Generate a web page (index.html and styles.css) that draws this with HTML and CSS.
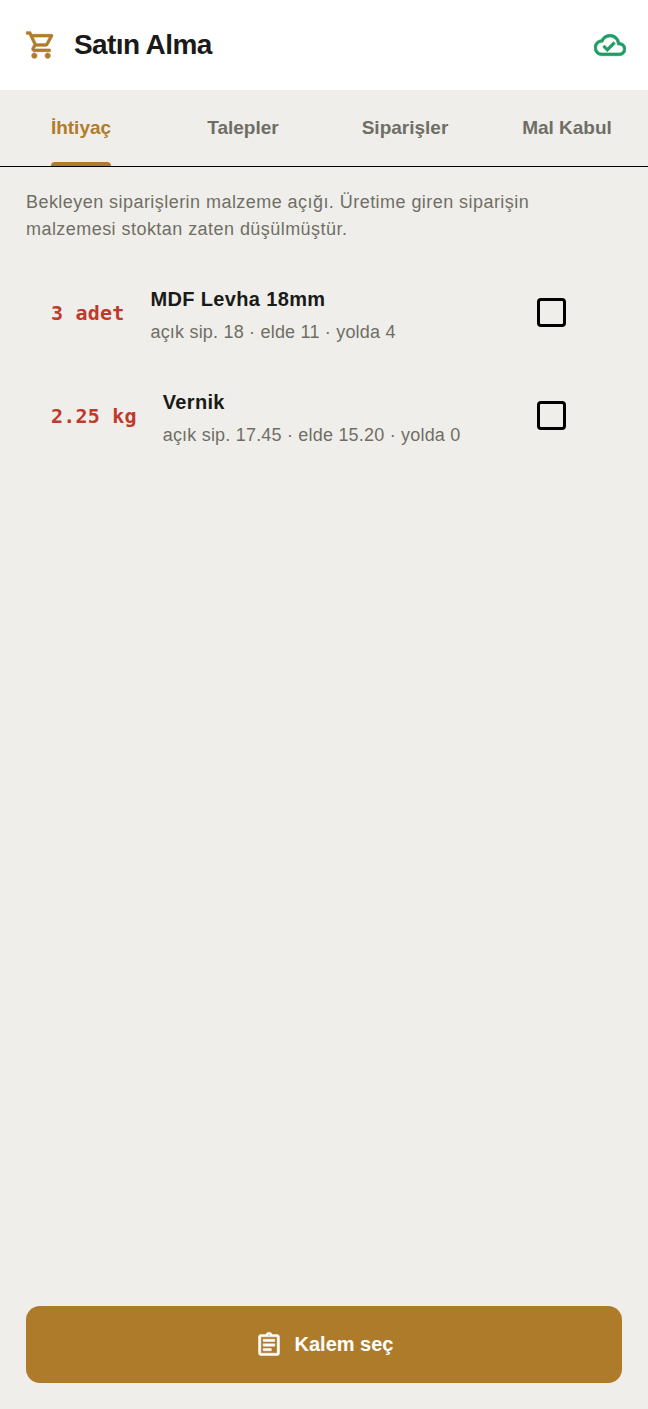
FILE: index.html
```html
<!DOCTYPE html>
<html lang="tr">
<head>
	<meta charset="UTF-8">
	<title>Satın Alma</title>
	<link rel="stylesheet" href="styles.css">
</head>
<body>
	<div class="page">
		<header class="topbar">
			<svg class="topbar-icon icon-gold" viewBox="0 0 24 24"><path d="M15.55 13c.75 0 1.41-.41 1.75-1.03l3.58-6.49c.37-.66-.11-1.48-.87-1.48H5.21l-.94-2H1v2h2l3.6 7.59-1.35 2.44C4.52 15.37 5.48 17 7 17h12v-2H7l1.1-2h7.45zM6.16 6h12.15l-2.76 5H8.53L6.16 6zM7 18c-1.1 0-1.99.9-1.99 2S5.9 22 7 22s2-.9 2-2-.9-2-2-2zm10 0c-1.1 0-1.99.9-1.99 2s.89 2 1.99 2 2-.9 2-2-.9-2-2-2z"/></svg>
			<h1 class="topbar-title">Satın Alma</h1>
			<svg class="topbar-icon icon-green" viewBox="0 0 24 24"><path d="M19.35 10.04C18.67 6.59 15.64 4 12 4 9.11 4 6.6 5.64 5.35 8.04 2.34 8.36 0 10.91 0 14c0 3.31 2.69 6 6 6h13c2.76 0 5-2.24 5-5 0-2.64-2.05-4.78-4.65-4.96zM19 18H6c-2.21 0-4-1.79-4-4 0-2.05 1.53-3.76 3.56-3.97l1.07-.11.5-.95C8.08 7.14 9.94 6 12 6c2.62 0 4.88 1.86 5.39 4.43l.3 1.5 1.53.11c1.56.1 2.78 1.41 2.78 2.96 0 1.65-1.35 3-3 3zm-9-3.82l-2.09-2.09L6.5 13.5 10 17l6.01-6.01-1.41-1.41z"/></svg>
		</header>

		<nav class="tabs">
			<div class="tab tab-active"><span class="tab-label">İhtiyaç</span></div>
			<div class="tab"><span class="tab-label">Talepler</span></div>
			<div class="tab"><span class="tab-label">Siparişler</span></div>
			<div class="tab"><span class="tab-label">Mal Kabul</span></div>
		</nav>

		<main class="content">
			<p class="intro">Bekleyen siparişlerin malzeme açığı. Üretime giren siparişin malzemesi stoktan zaten düşülmüştür.</p>

			<div class="item">
				<span class="item-qty">3 adet</span>
				<div class="item-text">
					<div class="item-name">MDF Levha 18mm</div>
					<div class="item-meta">açık sip. 18 · elde 11 · yolda 4</div>
				</div>
				<span class="checkbox"></span>
			</div>
			<div class="item">
				<span class="item-qty">2.25 kg</span>
				<div class="item-text">
					<div class="item-name">Vernik</div>
					<div class="item-meta">açık sip. 17.45 · elde 15.20 · yolda 0</div>
				</div>
				<span class="checkbox"></span>
			</div>
		</main>

		<footer class="actions">
			<button class="primary-btn" type="button">
				<svg class="btn-icon" viewBox="0 0 24 24"><path d="M19 3h-4.18C14.4 1.84 13.3 1 12 1c-1.3 0-2.4.84-2.82 2H5c-.14 0-.27.01-.4.04-.39.08-.74.28-1.01.55-.18.18-.33.4-.43.64-.1.23-.16.49-.16.77v14c0 .27.06.54.16.78s.25.45.43.64c.27.27.62.47 1.01.55.13.02.26.03.4.03h14c1.1 0 2-.9 2-2V5c0-1.1-.9-2-2-2zm-7-.25c.41 0 .75.34.75.75s-.34.75-.75.75-.75-.34-.75-.75.34-.75.75-.75zM19 19H5V5h14v14zM7 15h7v2H7zm0-4h10v2H7zm0-4h10v2H7z"/></svg>
				<span>Kalem seç</span>
			</button>
		</footer>
	</div>
</body>
</html>
```

FILE: styles.css
```css
* {
	box-sizing: border-box;
}

body {
	background-color: #efeeea;
	color: #1a1a18;
	font-family: "Liberation Sans", Arial, sans-serif;
	margin: 0;
	padding: 0;
}

.page {
	display: flex;
	flex-direction: column;
	height: 100vh;
}

.topbar {
	align-items: center;
	background-color: #fff;
	display: flex;
	height: 90px;
	padding: 0 22px 0 25px;
}

.topbar-icon {
	display: block;
	height: 32px;
	stroke-width: 0.5;
	width: 32px;
}

.icon-gold {
	fill: #b07c2b;
	stroke: #b07c2b;
}

.icon-green {
	fill: #1f9d63;
	stroke: #1f9d63;
}

.topbar-title {
	flex: 1;
	font-size: 28px;
	font-weight: 700;
	letter-spacing: -0.6px;
	margin: 0 0 0 17px;
}

.tabs {
	border-bottom: 1px solid #000;
	display: flex;
	height: 77px;
}

.tab {
	align-items: center;
	color: #6f6e66;
	display: flex;
	flex: 1;
	font-size: 19px;
	font-weight: 700;
	justify-content: center;
}

.tab-label {
	position: relative;
}

.tab-active {
	color: #b07c2b;
}

.tab-active .tab-label::after {
	background-color: #b07c2b;
	border-radius: 4px 4px 0 0;
	bottom: -27px;
	content: "";
	height: 4px;
	left: 0;
	position: absolute;
	right: 0;
}

.content {
	flex: 1;
	padding: 22px 26px 0;
}

.intro {
	color: #6f6e66;
	font-size: 18px;
	letter-spacing: 0.45px;
	line-height: 27px;
	margin: 0 0 19px;
}

.item {
	align-items: center;
	display: flex;
	height: 103px;
	padding: 0 56px 0 25px;
}

.item-qty {
	color: #c0392b;
	font-family: "DejaVu Sans Mono", "Liberation Mono", monospace;
	font-size: 20px;
	font-weight: 700;
	letter-spacing: 0.2px;
	margin-bottom: 2px;
	margin-right: 26px;
}

.item-text {
	flex: 1;
	padding-top: 3px;
}

.item-name {
	font-size: 20px;
	font-weight: 700;
	letter-spacing: 0.35px;
	margin-bottom: 11px;
}

.item-meta {
	color: #6f6e66;
	font-size: 18px;
	letter-spacing: 0.2px;
}

.checkbox {
	border: 3px solid #000;
	border-radius: 4px;
	height: 29px;
	margin-bottom: 2px;
	width: 29px;
}

.actions {
	padding: 0 26px 26px;
}

.primary-btn {
	align-items: center;
	background-color: #ae7b2b;
	border: none;
	border-radius: 14px;
	color: #fff;
	display: flex;
	font-family: inherit;
	font-size: 20px;
	font-weight: 700;
	gap: 12px;
	height: 77px;
	justify-content: center;
	width: 100%;
}

.btn-icon {
	fill: #fff;
	height: 28px;
	stroke: #fff;
	stroke-width: 0.4;
	width: 28px;
}
```
